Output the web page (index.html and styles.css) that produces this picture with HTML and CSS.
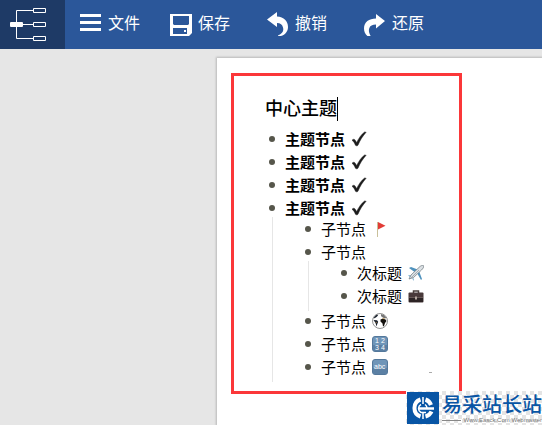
FILE: index.html
```html
<!DOCTYPE html>
<html lang="zh-CN">
  <head>
    <meta charset="UTF-8">
    <meta name="viewport" content="width=device-width, initial-scale=1.0">
    <title>中心主题</title>
    <link rel="stylesheet" href="styles.css">
  </head>
  <body>
    <svg class="symbols" aria-hidden="true">
      <symbol id="check" viewBox="0 0 16 16">
        <path d="M1 9.200C2 8 3.500 7.800 4.300 9.300L5.600 11.500C7.800 7 10.400 3.300 13.600.9L15.200 1.200C11.800 5 9 9.300 7 14.200C6.200 15.200 4.800 15 4.300 14C3.400 11.800 2.500 10.300 1 9.200Z" fill="#1c1c1c" stroke="#1c1c1c" stroke-width=".4"/>
      </symbol>
    </svg>
    <header class="topbar">
      <div class="logo">
        <svg width="37" height="34" viewBox="0 0 37 34" fill="none" stroke="#fff">
          <path d="M23 2.500H6.500V30.500H23M13 16.500H23"/>
          <path d="M23.500.5h12v4h-12zM23.500 14.500h12v4h-12zM23.500 28.500h12v4h-12z"/>
          <rect x="0" y="14" width="13" height="5" rx="1" fill="#fff" stroke="none"/>
        </svg>
      </div>
      <nav class="toolbar">
        <button type="button" class="tool">
          <svg width="22" height="24" viewBox="0 0 22 24" fill="#fff">
            <path d="M0 2h21v3H0zM0 9h21v3H0zM0 16h21v3H0z"/>
          </svg>
          文件
        </button>
        <button type="button" class="tool">
          <svg width="22" height="24" viewBox="0 0 22 24" fill="#fff" fill-rule="evenodd">
            <path d="M0 2h22v19l-3 3H0zM3 4v8l1 1h14l1-1V4zM3 16v6h14v-6zM14 18h2v2h-2z"/>
          </svg>
          保存
        </button>
        <div class="history">
          <button type="button" class="tool">
            <svg width="22" height="24" viewBox="0 0 22 24" fill="#fff">
              <path d="M0 7.500L10 0V4.500C17 5 21 9 21 15C21 20 17.500 24 11 24.500V23.500C15.500 21.500 17 19 16 15.500C15.300 12.500 13.500 11 10 11V15Z"/>
            </svg>
            撤销
          </button>
          <button type="button" class="tool">
            <svg width="22" height="24" viewBox="0 0 22 24" fill="#fff">
              <path d="M21 9L12 2V6.500C5 6.500 0 10 0 16.500C0 20 1.500 22.500 4 24.500H7C5 21.500 4.500 19 5.200 16.500C6 13.500 8.500 12.500 12 12.500V16.500Z"/>
            </svg>
            还原
          </button>
        </div>
      </nav>
    </header>
    <main class="workspace">
      <article class="paper">
        <section class="outline">
          <h1 class="root">中心主题</h1>
          <ul class="nodes">
            <li><div class="node main">主题节点 <svg class="mark"><use href="#check"/></svg></div></li>
            <li><div class="node main">主题节点 <svg class="mark"><use href="#check"/></svg></div></li>
            <li><div class="node main">主题节点 <svg class="mark"><use href="#check"/></svg></div></li>
            <li>
              <div class="node main">主题节点 <svg class="mark"><use href="#check"/></svg></div>
              <ul class="nodes children">
                <li>
                  <div class="node">子节点
                    <svg class="mark" viewBox="0 0 16 16">
                      <path d="M5.500 1v15" stroke="#c9c09a"/>
                      <path d="M6 1l7.500 3.700L6 8.500z" fill="#e23c36"/>
                    </svg>
                  </div>
                </li>
                <li>
                  <div class="node">子节点</div>
                  <ul class="nodes children">
                    <li>
                      <div class="node">次标题
                        <svg class="mark" viewBox="0 0 16 16">
                          <path d="M1 3l2-1 8 3-3 3zM11 6l3 8-1 1-4-7zM0 10l4 1-2 1zM5 12l1 4-1.500-2z" fill="#4f92bd"/>
                          <path d="M1 14L3 10 12 1.500C13.500.2 16 0 15.700 1.200 15.600 2.500 15 3.500 13.500 5L5.500 12.500Z" fill="#dce1e5" stroke="#778188" stroke-width=".8"/>
                          <path d="M2 14l9-9" stroke="#8a989f" stroke-width=".7"/>
                        </svg>
                      </div>
                    </li>
                    <li>
                      <div class="node">次标题
                        <svg class="mark" viewBox="0 0 16 16">
                          <path d="M5.500 5V3h5v2" fill="none" stroke="#4a3e3b" stroke-width="1.500"/>
                          <rect x=".5" y="4.500" width="15" height="10" rx="1" fill="#49393a"/>
                          <path d="M1 9.500h14V14H1z" fill="#2d2425"/>
                          <path d="M1 9.500h14" stroke="#7b6a67" stroke-width=".7"/>
                          <rect x="7" y="8.500" width="2" height="3" fill="#b5a7a0"/>
                        </svg>
                      </div>
                    </li>
                  </ul>
                </li>
                <li>
                  <div class="node">子节点
                    <svg class="mark" viewBox="0 0 16 16">
                      <circle cx="8" cy="8" r="7.500" fill="#fff" stroke="#777" stroke-width=".8"/>
                      <path d="M1.500 5.500C2.500 3 4 2 5.500 1.500L6 2.500 4.500 4 3 5zM1.500 7l3.500.3 1.200 1.500L5.300 11 4.500 13.500 3.500 10Z" fill="#1d2430"/>
                      <path d="M9 1l3 1 2.500 3-2 .5L10 4 9 3z" fill="#777"/>
                      <path d="M8.500 6.500l2.500-1 2.500 1L14.500 8l-1.500 2-1 3-1 .5-.5-3L8.500 8.500z" fill="#15120e"/>
                      <path d="M10.500 5.500l2 .3M4 9l.5 1" stroke="#e2a23b" stroke-width=".6"/>
                    </svg>
                  </div>
                </li>
                <li>
                  <div class="node">子节点
                    <svg class="mark" viewBox="0 0 16 16">
                      <rect x=".5" y=".5" width="15" height="15" rx="2.500" fill="#6f95b8" stroke="#54789b"/>
                      <path d="M1 9h14v4.500L13.500 15h-11L1 13.500z" fill="#5b80a4"/>
                      <g class="digits"><text x="3" y="7">1</text><text x="9" y="7">2</text><text x="3" y="14">3</text><text x="9" y="14">4</text></g>
                    </svg>
                  </div>
                </li>
                <li>
                  <div class="node">子节点
                    <svg class="mark" viewBox="0 0 16 16">
                      <rect x=".5" y=".5" width="15" height="15" rx="2.500" fill="#6f95b8" stroke="#54789b"/>
                      <path d="M1 9h14v4.500L13.500 15h-11L1 13.500z" fill="#5b80a4"/>
                      <text class="digits" x="2" y="10">abc</text>
                    </svg>
                    <span class="dash"></span>
                  </div>
                </li>
              </ul>
            </li>
          </ul>
        </section>
      </article>
    </main>
    <aside class="watermark">
      <svg width="32" height="32" viewBox="0 0 32 32">
        <path d="M0 0h32v32H0z" fill="#0855a5"/>
        <g fill="none" stroke="#fff">
          <path d="M13.500 7.500A9 9 0 0 0 13.500 24.500" stroke-width="4"/>
          <path d="M18.500 7.500A9 9 0 0 1 24 13M18.500 24.500A9 9 0 0 0 24.500 19.500" stroke-width="4"/>
          <path d="M11.500 16.500H27" stroke-width="2.500"/>
          <path d="M14 12.500A4.500 4.500 0 0 0 14 20.500H19M18 12.500A4.500 4.500 0 0 1 20 16" stroke-width="1.500"/>
          <path d="M16 5v7M16 21v6" stroke-width="1.500"/>
        </g>
      </svg>
      <div class="site">
        <strong class="site-name">易采站长站</strong>
        <span class="site-url">Www.Easck.Com Webmaster</span>
      </div>
    </aside>
  </body>
</html>
```
FILE: styles.css
```css
:root {
  --bar: #2b579a;
  --bar-dark: #1e3a66;
  --desk: #e6e6e6;
  --frame: #fb3739;
  --bullet: #56564b;
  --brand: #0855a5;
}

* {
  box-sizing: border-box;
}

body {
  margin: 0;
  min-height: 100vh;
  display: flex;
  flex-direction: column;
  background: var(--desk);
  color: #000;
  font-family: "Liberation Sans", "Noto Sans CJK SC", sans-serif;
}

.symbols {
  position: absolute;
  width: 0;
  height: 0;
}

/* top bar */
.topbar {
  display: flex;
  height: 49px;
  background: var(--bar);
}

.logo {
  width: 65px;
  padding: 8px 0 0 10px;
  background: var(--bar-dark);
}

.toolbar {
  display: flex;
  align-items: flex-start;
  gap: 30px;
  padding: 12px 15px;
}

.history {
  display: flex;
  gap: 37px;
  margin-left: 7px;
}

.tool {
  display: flex;
  align-items: center;
  gap: 6px;
  padding: 0;
  border: 0;
  background: none;
  color: #fff;
  font-family: inherit;
  font-size: 16px;
  line-height: 24px;
  white-space: nowrap;
  cursor: pointer;
}

/* document */
.workspace {
  flex: 1;
  display: flex;
  padding: 9px 0 0 217px;
}

.paper {
  flex: 1;
  padding: 15px 14px 0;
  background: #fff;
  box-shadow: 0 0 2px 1px rgba(0, 0, 0, 0.2);
}

.outline {
  width: fit-content;
  padding: 21px 27px 11px 31px;
  border: 3px solid var(--frame);
}

.root {
  width: fit-content;
  margin: 0 0 6px;
  border-right: 1px solid #000;
  font-size: 18px;
  font-weight: 500;
  line-height: 24px;
}

.nodes {
  margin: 0;
  padding: 0 0 0 4px;
  list-style: none;
}

.children {
  margin: -2px 0 -2px 3px;
  padding: 0 0 4px 32px;
  border-left: 1px solid #e6e6e6;
}

.node {
  display: flex;
  align-items: center;
  gap: 6px;
  height: 23px;
  font-size: 15px;
  white-space: nowrap;
}

.node::before {
  content: "";
  width: 6px;
  height: 6px;
  margin-right: 4px;
  border-radius: 50%;
  background: var(--bullet);
}

.main {
  font-weight: bold;
}

.mark {
  width: 16px;
  height: 16px;
}

.dash {
  align-self: flex-end;
  width: 3px;
  height: 1px;
  margin: 0 0 5px 35px;
  background: #aaa;
}

.digits {
  fill: #fff;
  font-size: 7px;
}

/* site mark */
.watermark {
  position: absolute;
  right: 0;
  bottom: 0;
  display: flex;
  gap: 3px;
  padding: 1px 0 1px 1px;
  background: repeating-conic-gradient(#e4e4e4 0 25%, #fff 0 50%) 0 0 / 8px 8px;
}

.site {
  display: flex;
  flex-direction: column;
  color: var(--brand);
}

.site-name {
  padding-top: 2px;
  font-size: 20px;
  font-weight: 500;
  line-height: 22px;
}

.site-url {
  display: flex;
  align-items: center;
  gap: 2px;
  color: #777;
  font-size: 6px;
  line-height: 8px;
  white-space: nowrap;
}

.site-url::before {
  content: "";
  flex: 1;
  height: 1px;
  background: #888;
}
```
